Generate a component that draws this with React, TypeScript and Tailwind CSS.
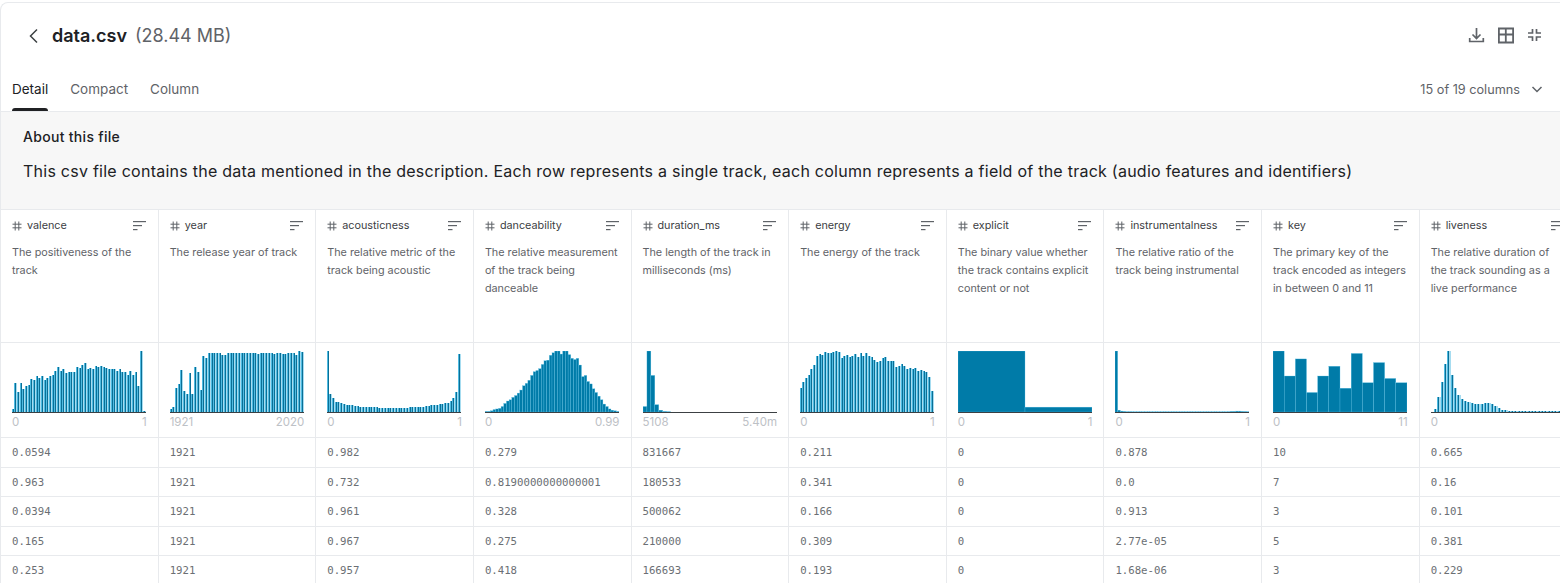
type Col = {
  name: string;
  desc: string;
  lo: string;
  hi: string;
  bars: number[];
  solid?: boolean;
  rows: string[];
};

const columns: Col[] = [
  {
    name: "valence",
    desc: "The positiveness of the track",
    lo: "0",
    hi: "1",
    bars: [5, 48, 33, 48, 37, 43, 45, 54, 52, 59, 55, 59, 53, 56, 59, 60, 67, 74, 68, 71, 64, 66, 65, 65, 74, 72, 77, 80, 71, 72, 70, 76, 74, 76, 73, 72, 71, 71, 70, 68, 71, 65, 66, 61, 67, 60, 65, 42, 100, 2],
    rows: ["0.0594", "0.963", "0.0394", "0.165", "0.253"],
  },
  {
    name: "year",
    desc: "The release year of track",
    lo: "1921",
    hi: "2020",
    bars: [5, 9, 40, 46, 69, 35, 29, 64, 29, 74, 65, 36, 92, 89, 97, 97, 97, 97, 97, 94, 94, 97, 97, 97, 97, 97, 97, 97, 97, 97, 97, 97, 95, 97, 97, 97, 97, 97, 95, 97, 96, 95, 95, 97, 97, 97, 94, 100, 98],
    rows: ["1921", "1921", "1921", "1921", "1921"],
  },
  {
    name: "acousticness",
    desc: "The relative metric of the track being acoustic",
    lo: "0",
    hi: "1",
    bars: [100, 30, 23, 17, 16, 14, 13, 12, 11, 11, 10, 10, 9, 9, 9, 8, 8, 8, 8, 7, 7, 7, 7, 7, 7, 7, 7, 7, 7, 7, 8, 8, 8, 8, 9, 9, 10, 10, 11, 12, 12, 13, 13, 14, 15, 18, 23, 33, 95],
    rows: ["0.982", "0.732", "0.961", "0.967", "0.957"],
  },
  {
    name: "danceability",
    desc: "The relative measurement of the track being danceable",
    lo: "0",
    hi: "0.99",
    solid: true,
    bars: [1, 1, 2, 4, 5, 6, 9, 14, 18, 20, 24, 27, 31, 36, 43, 47, 52, 60, 66, 68, 71, 78, 84, 85, 93, 97, 100, 100, 95, 100, 100, 94, 88, 86, 88, 77, 58, 60, 50, 46, 38, 32, 26, 20, 13, 9, 5, 3, 2, 1],
    rows: ["0.279", "0.8190000000000001", "0.328", "0.275", "0.418"],
  },
  {
    name: "duration_ms",
    desc: "The length of the track in milliseconds (ms)",
    lo: "5108",
    hi: "5.40m",
    solid: true,
    bars: [9, 100, 60, 12, 3, 1, 0.5, 0, 0, 0, 0, 0, 0, 0, 0, 0, 0, 0, 0, 0, 0, 0, 0, 0, 0, 0, 0, 0, 0, 0, 0, 0, 0, 0],
    rows: ["831667", "180533", "500062", "210000", "166693"],
  },
  {
    name: "energy",
    desc: "The energy of the track",
    lo: "0",
    hi: "1",
    bars: [40, 50, 56, 61, 70, 77, 92, 95, 93, 99, 97, 97, 98, 100, 98, 88, 92, 94, 90, 92, 95, 90, 96, 91, 96, 92, 90, 85, 82, 83, 88, 90, 84, 83, 84, 74, 75, 78, 76, 71, 72, 71, 72, 68, 69, 68, 66, 58, 35],
    rows: ["0.211", "0.341", "0.166", "0.309", "0.193"],
  },
  {
    name: "explicit",
    desc: "The binary value whether the track contains explicit content or not",
    lo: "0",
    hi: "1",
    solid: true,
    bars: [100, 8],
    rows: ["0", "0", "0", "0", "0"],
  },
  {
    name: "instrumentalness",
    desc: "The relative ratio of the track being instrumental",
    lo: "0",
    hi: "1",
    solid: true,
    bars: [100, 3, 1.5, 1, 0.5, 0.5, 0.3, 0.3, 0.3, 0.3, 0.3, 0.3, 0.3, 0.3, 0.3, 0.3, 0.3, 0.3, 0.3, 0.3, 0.3, 0.3, 0.3, 0.3, 0.3, 0.3, 0.3, 0.3, 0.3, 0.3, 0.3, 0.3, 0.3, 0.3, 0.3, 0.3, 0.3, 0.3, 0.3, 0.3, 0.3, 0.3, 0.5, 1, 1, 1.5, 1.5, 1, 0.8, 0.5],
    rows: ["0.878", "0.0", "0.913", "2.77e-05", "1.68e-06"],
  },
  {
    name: "key",
    desc: "The primary key of the track encoded as integers in between 0 and 11",
    lo: "0",
    hi: "11",
    solid: true,
    bars: [100, 59, 87, 32, 59, 75, 39, 96, 48, 81, 55, 48],
    rows: ["10", "7", "3", "5", "3"],
  },
  {
    name: "liveness",
    desc: "The relative duration of the track sounding as a live performance",
    lo: "0",
    hi: "1",
    bars: [0.5, 5, 24, 50, 78, 100, 60, 40, 28, 22, 18, 17, 14, 13, 13, 13, 15, 15, 13, 10, 6, 4, 3, 2, 2, 2, 2, 2, 2, 2, 2, 2, 2, 1, 1, 1, 1, 1, 1, 0.5],
    rows: ["0.665", "0.16", "0.101", "0.381", "0.229"],
  },
];

function Histogram({ bars, solid }: { bars: number[]; solid?: boolean }) {
  const w = 134;
  const h = 62;
  const step = w / bars.length;
  return (
    <svg width={w} height={h} viewBox={`0 0 ${w} ${h}`} className="block">
      {bars.map((v, i) => {
        const bh = (v / 100) * (h - 1);
        const x = i * step;
        if (solid) {
          return <rect key={i} x={x} y={h - 1 - bh} width={step} height={bh} fill="#007ba8" stroke="#5cc3e8" strokeWidth={0.3} />;
        }
        const px = Math.floor(x);
        const next = Math.floor(x + step);
        return (
          <g key={i} shapeRendering="crispEdges">
            <rect x={px} y={h - 1 - bh} width={next - px} height={bh} fill="#a6dcf0" />
            <rect x={px} y={h - 1 - bh} width={1} height={bh} fill="#4fbbe2" />
            <rect x={px + 1} y={h - 1 - bh} width={1} height={bh} fill="#0a6f96" />
          </g>
        );
      })}
      <rect x={0} y={h - 1} width={w} height={1} fill="#3c4043" />
    </svg>
  );
}

function SortIcon() {
  return (
    <svg width="13" height="10" viewBox="0 0 13 10" fill="#5f6368">
      <rect x="0" y="0" width="13" height="1.2" />
      <rect x="0" y="4" width="9" height="1.2" />
      <rect x="0" y="8" width="4.5" height="1.2" />
    </svg>
  );
}

function HashIcon() {
  return (
    <svg width="10" height="10" viewBox="0 0 10 10" stroke="#5f6368" strokeWidth="1" fill="none">
      <path d="M3.2 0.5V9.5M6.8 0.5V9.5M0.5 3.2H9.5M0.5 6.8H9.5" />
    </svg>
  );
}

export default function App() {
  return (
    <div
      className="w-[1560px] h-[583px] overflow-hidden bg-white pt-[2px] text-[#202124]"
      style={{ fontFamily: "Inter, 'Liberation Sans', sans-serif" }}
    >
      <div className="h-[581px] overflow-hidden rounded-tl-lg border-t border-l border-[#e8eaed]">
        {/* Title bar */}
        <div className="flex h-[67px] items-center justify-between pb-[2px] pl-[24px] pr-[15px]">
          <div className="flex items-center">
            <svg width="18" height="18" viewBox="0 0 18 18" fill="none" stroke="#3c4043" strokeWidth="1.5">
              <path d="M12 2.5L5.5 9L12 15.5" />
            </svg>
            <span className="ml-[9px] text-[18px] font-semibold">data.csv</span>
            <span className="ml-[8px] text-[18px] text-[#5f6368]">(28.44 MB)</span>
          </div>
          <div className="flex items-center gap-[9px] pb-[2px]">
            <svg width="20" height="20" viewBox="0 0 20 20" fill="none" stroke="#5f6368" strokeWidth="1.7">
              <path d="M9.5 3V13.5M5.5 9.5L9.5 13.5L13.5 9.5M2.7 13V16.5H16.3V13" />
            </svg>
            <svg width="20" height="20" viewBox="0 0 20 20" fill="none" stroke="#5f6368" strokeWidth="1.8">
              <path d="M2.9 3.5H17.1V17.5H2.9ZM2.9 9.5H17.1M9.8 3.5V17.5" />
            </svg>
            <svg width="20" height="20" viewBox="0 0 20 20" fill="none" stroke="#5f6368" strokeWidth="1.7">
              <path d="M7.5 4V8H3M11.5 4V8H16M7.5 16V12H3M11.5 16V12H16" />
            </svg>
          </div>
        </div>

        {/* Tabs */}
        <div className="flex h-[42px] items-center justify-between border-b border-[#e8eaed] pl-[11px] pr-[15px]">
          <div className="flex h-full items-center gap-[22px] text-[13.5px] text-[#5f6368]">
            <div className="relative flex h-full items-center pb-[2px] text-[#202124]">
              Detail
              <span className="absolute bottom-0 left-0 right-0 h-[3px] rounded-t bg-[#202124]" />
            </div>
            <span className="pb-[2px]">Compact</span>
            <span className="pb-[2px]">Column</span>
          </div>
          <div className="flex items-center gap-[9px] pb-[2px] text-[12.7px] text-[#5f6368]">
            15 of 19 columns
            <svg width="16" height="16" viewBox="0 0 16 16" fill="none" stroke="#5f6368" strokeWidth="1.5">
              <path d="M3.5 6L8 10.5L12.5 6" />
            </svg>
          </div>
        </div>

        {/* About */}
        <div className="h-[97px] bg-[#f7f7f7] pl-[22px] pt-[16px]">
          <div className="text-[14px] leading-[18px] font-medium tracking-[0.3px]">About this file</div>
          <p className="mt-[15px] text-[16px] leading-[20px] tracking-[0.25px] whitespace-nowrap">
            This csv file contains the data mentioned in the description. Each row represents a single track, each column represents a field of the track (audio features and identifiers)
          </p>
        </div>

        {/* Table */}
        <div className="flex w-[1700px] border-t border-[#e8eaed]">
          {columns.map((c) => (
            <div key={c.name} className="w-[157.63px] shrink-0 border-r border-[#e8eaed]">
              <div className="h-[132px] pl-[11px] pr-[12px] pt-[8px]">
                <div className="flex items-center justify-between">
                  <div className="flex items-center gap-[5px] text-[10.8px] leading-[16px] text-[#3c4043]">
                    <HashIcon />
                    {c.name}
                  </div>
                  <SortIcon />
                </div>
                <p className="mt-[10px] w-[134px] text-[10.8px] leading-[18px] text-[#5f6368]">{c.desc}</p>
              </div>
              <div className="h-[95px] border-t border-[#e8eaed] px-[11px] pt-[8px]">
                <Histogram bars={c.bars} solid={c.solid} />
                <div className="mt-[2px] flex justify-between text-[11.5px] leading-[14px] text-[#bdc1c6]">
                  <span>{c.lo}</span>
                  <span>{c.hi}</span>
                </div>
              </div>
              {c.rows.map((r, i) => (
                <div
                  key={i}
                  className="flex h-[29.5px] items-center border-t border-[#e8eaed] px-[11px] pt-[2px] text-[10.7px] text-[#6b6f74]"
                  style={{ fontFamily: "'DejaVu Sans Mono', monospace" }}
                >
                  {r}
                </div>
              ))}
            </div>
          ))}
        </div>
      </div>
    </div>
  );
}
